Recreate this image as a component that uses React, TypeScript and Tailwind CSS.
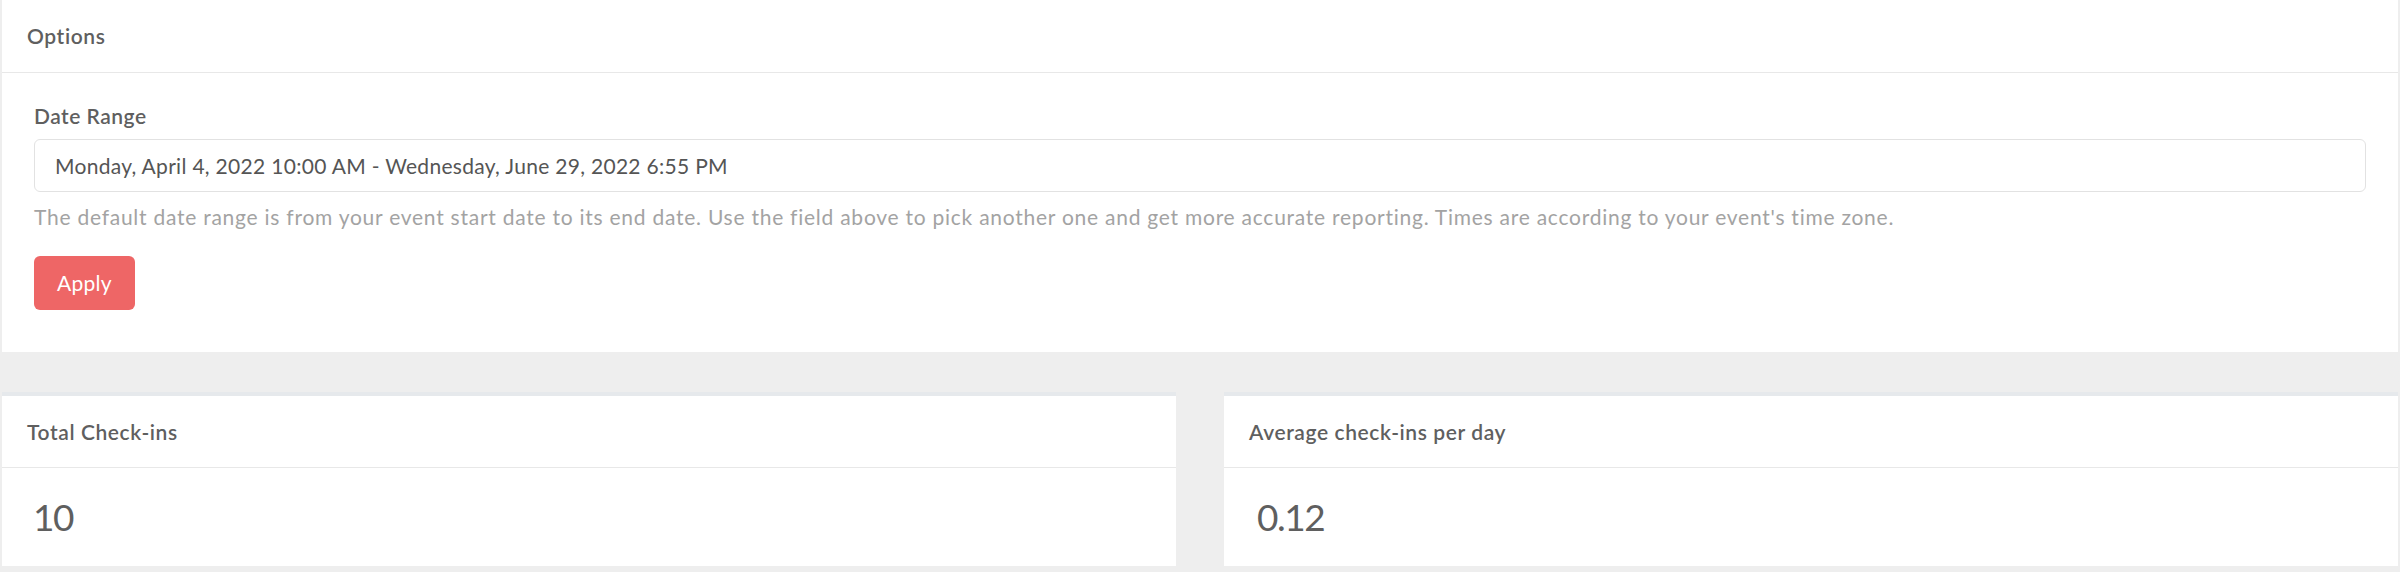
const font = "font-['Lato','Liberation_Sans',sans-serif]";

function StatCard({ title, value, valueIndent }: { title: string; value: string; valueIndent: string }) {
  return (
    <div className="border-t-4 border-[#e6e9ec] bg-white">
      <div className="flex h-[72px] items-center border-b border-[#e8e8e8] px-[25px]">
        <h3 className="text-[21px] font-semibold tracking-[0.6px] text-[#5f5f5f]">{title}</h3>
      </div>
      <div className={`flex h-[98px] items-center ${valueIndent}`}>
        <span className="text-[37px] tracking-[-1.5px] text-[#5f5f5f]">{value}</span>
      </div>
    </div>
  );
}

export default function App() {
  return (
    <main className={`h-[572px] w-full bg-[#eeeeee] px-[2px] ${font}`}>
      {/* Options */}
      <section className="bg-white">
        <div className="flex h-[73px] items-center border-b border-[#e8e8e8] px-[25px]">
          <h2 className="text-[21px] font-semibold tracking-[0.6px] text-[#5f5f5f]">Options</h2>
        </div>
        <div className="px-[32px] pb-[42px] pt-[29px]">
          <label className="block text-[21px] font-semibold leading-[28px] tracking-[0.5px] text-[#5f5f5f]">Date Range</label>
          <div className="mt-[9px] flex h-[53px] items-center rounded-[6px] border border-[#e2e2e2] px-[20px] text-[21px] tracking-[0.3px] text-[#555555]">
            Monday, April 4, 2022 10:00 AM - Wednesday, June 29, 2022 6:55 PM
          </div>
          <p className="mt-[11px] text-[21px] leading-[28px] tracking-[0.75px] text-[#a3a3a3]">
            The default date range is from your event start date to its end date. Use the field above to pick another one and get more accurate reporting. Times are according to your event's time zone.
          </p>
          <button className="mt-[25px] h-[54px] w-[101px] rounded-[6px] bg-[#ee6666] text-[21px] tracking-[0.3px] text-white">
            Apply
          </button>
        </div>
      </section>

      {/* Stats */}
      <div className="mt-[40px] grid grid-cols-2 gap-[48px]">
        <StatCard title="Total Check-ins" value="10" valueIndent="px-[31px]" />
        <StatCard title="Average check-ins per day" value="0.12" valueIndent="px-[33px]" />
      </div>
    </main>
  );
}
